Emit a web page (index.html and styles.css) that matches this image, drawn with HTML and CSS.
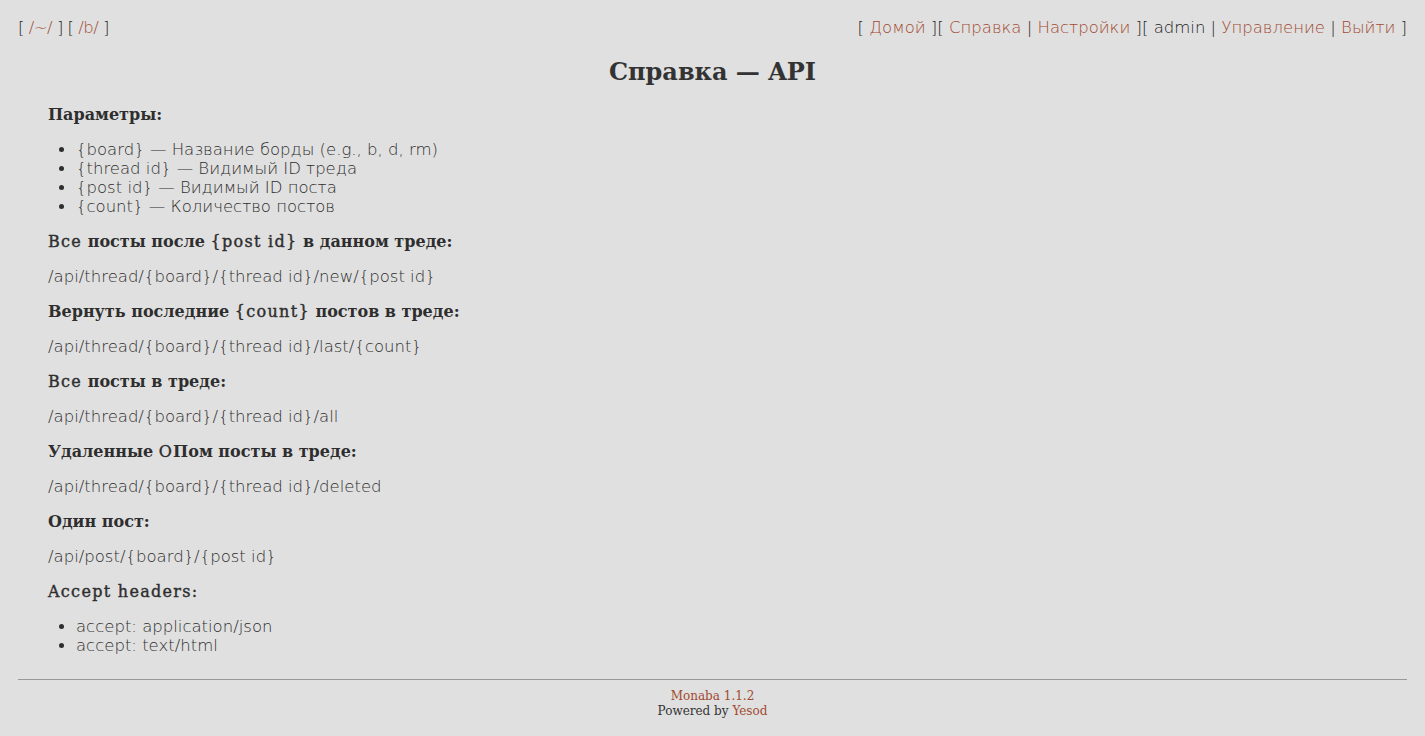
FILE: index.html
```html
<!DOCTYPE html>
<html lang="ru">
<head>
<meta charset="utf-8">
<title>Справка — API</title>
<link rel="stylesheet" href="styles.css">
</head>
<body>
<div class="nav">
  <div class="nav-left">[ <a href="#">/~/</a> ] [ <a href="#">/b/</a> ]</div>
  <div class="nav-right">[ <a href="#">Домой</a> ][ <a href="#">Справка</a> | <a href="#">Настройки</a> ][ admin | <a href="#">Управление</a> | <a href="#">Выйти</a> ]</div>
</div>
<h1 class="title">Справка — API</h1>
<div class="content">
  <h4 class="hd">Параметры:</h4>
  <ul class="list">
    <li>{board} — Название борды (e.g., b, d, rm)</li>
    <li>{thread id} — Видимый ID треда</li>
    <li>{post id} — Видимый ID поста</li>
    <li>{count} — Количество постов</li>
  </ul>
  <h4 class="hd"><span class="lt">Все</span> посты после <span class="lt">{post id}</span> в данном треде:</h4>
  <p class="path">/api/thread/{board}/{thread id}/new/{post id}</p>
  <h4 class="hd">Вернуть последние <span class="lt">{count}</span> постов в треде:</h4>
  <p class="path">/api/thread/{board}/{thread id}/last/{count}</p>
  <h4 class="hd"><span class="lt">Все</span> посты в треде:</h4>
  <p class="path">/api/thread/{board}/{thread id}/all</p>
  <h4 class="hd">Удаленные <span class="lt">О</span>Пом посты в треде:</h4>
  <p class="path">/api/thread/{board}/{thread id}/deleted</p>
  <h4 class="hd">Один пост:</h4>
  <p class="path">/api/post/{board}/{post id}</p>
  <h4 class="hd"><span class="lt">Accept headers:</span></h4>
  <ul class="list">
    <li>accept: application/json</li>
    <li>accept: text/html</li>
  </ul>
</div>
<hr class="rule">
<div class="footer">
  <a href="#">Monaba 1.1.2</a><br>
  Powered by <a href="#">Yesod</a>
</div>
</body>
</html>
```
FILE: styles.css
```css
html {
  background: #e0e0e0;
}
body {
  margin: 0;
  padding: 18px 18px 0 18px;
  background: #e0e0e0;
  color: #2e2e2e;
  font-family: "DejaVu Sans ExtraLight", "DejaVu Sans", sans-serif;
  font-weight: 200;
  font-size: 16.5px;
  line-height: 19px;
}
a {
  color: #a14a30;
  text-decoration: none;
}
.nav {
  display: flex;
  justify-content: space-between;
  color: #222;
}
.nav-left {
  letter-spacing: -0.5px;
}
.title {
  margin: 21px 0 19px 0;
  text-align: center;
  font-family: "DejaVu Serif", serif;
  font-weight: bold;
  font-size: 24px;
  line-height: 28px;
  color: #333;
}
.content {
  margin-left: 30px;
}
.hd {
  margin: 16px 0;
  font-family: "DejaVu Serif", serif;
  font-weight: bold;
  font-size: 16px;
  line-height: 19px;
  color: #2e2e2e;
}
.lt {
  font-weight: normal;
  -webkit-text-stroke: 0.4px #2e2e2e;
  letter-spacing: 1.3px;
}
.path {
  margin: 16px 0;
}
.list {
  margin: 16px 0;
  padding-left: 28px;
}
.rule {
  margin: 24px 0 0 0;
  border: 0;
  border-top: 1px solid #999;
  height: 0;
}
.footer {
  padding-top: 9px;
  text-align: center;
  font-family: "DejaVu Serif", serif;
  font-weight: normal;
  font-size: 12px;
  line-height: 15px;
  color: #333;
}
```
